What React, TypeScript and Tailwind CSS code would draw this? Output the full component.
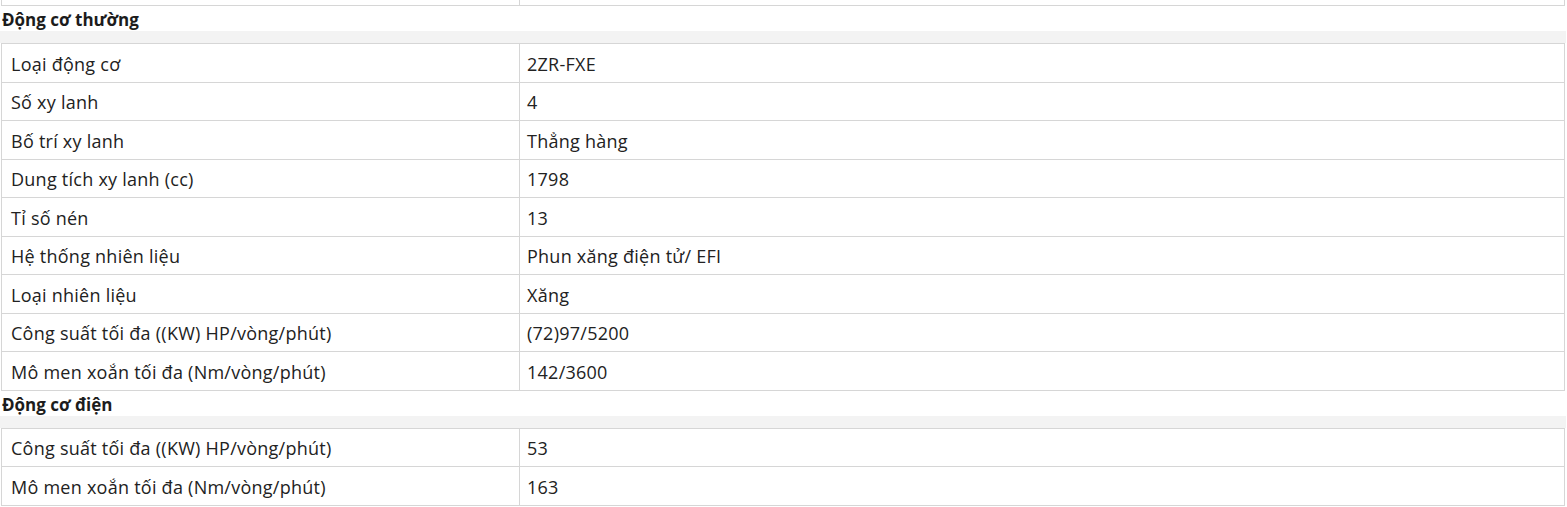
import React from "react";

const engineRows = [
  ["Loại động cơ", "2ZR-FXE"],
  ["Số xy lanh", "4"],
  ["Bố trí xy lanh", "Thẳng hàng"],
  ["Dung tích xy lanh (cc)", "1798"],
  ["Tỉ số nén", "13"],
  ["Hệ thống nhiên liệu", "Phun xăng điện tử/ EFI"],
  ["Loại nhiên liệu", "Xăng"],
  ["Công suất tối đa ((KW) HP/vòng/phút)", "(72)97/5200"],
  ["Mô men xoắn tối đa (Nm/vòng/phút)", "142/3600"],
];

const motorRows = [
  ["Công suất tối đa ((KW) HP/vòng/phút)", "53"],
  ["Mô men xoắn tối đa (Nm/vòng/phút)", "163"],
];

const SpecTable = ({ rows }: { rows: string[][] }) => (
  <div className="ml-[1px] w-[1564px] border-l border-r border-t border-[#d6d6d6] text-[18px] tracking-[0.25px]">
    {rows.map((row, i) => (
      <div key={i} className="flex h-[38.5px] border-b border-[#d6d6d6]">
        <div className="w-[518px] shrink-0 border-r border-[#d6d6d6] pl-[9px] pt-[3px] flex items-center">
          {row[0]}
        </div>
        <div className="flex-1 pl-[7px] pt-[3px] flex items-center">{row[1]}</div>
      </div>
    ))}
  </div>
);

const SectionTitle = ({ title }: { title: string }) => (
  <>
    <div className="h-[25px] pl-[2px] pt-[3px] flex items-center font-bold text-[17px] text-[#1c1c1c]">
      {title}
    </div>
    <div className="h-[12px] w-[1566px] bg-[#f3f3f3]" />
  </>
);

export default function App() {
  return (
    <div
      className="w-[1567px] h-[507px] overflow-hidden bg-white text-[#222]"
      style={{ fontFamily: '"Open Sans", "Noto Sans", sans-serif' }}
    >
      <div className="ml-[1px] w-[1564px] h-[6px] flex border-l border-r border-b border-[#d6d6d6]">
        <div className="w-[518px] border-r border-[#d6d6d6]" />
      </div>
      <SectionTitle title="Động cơ thường" />
      <SpecTable rows={engineRows} />
      <SectionTitle title="Động cơ điện" />
      <SpecTable rows={motorRows} />
    </div>
  );
}
